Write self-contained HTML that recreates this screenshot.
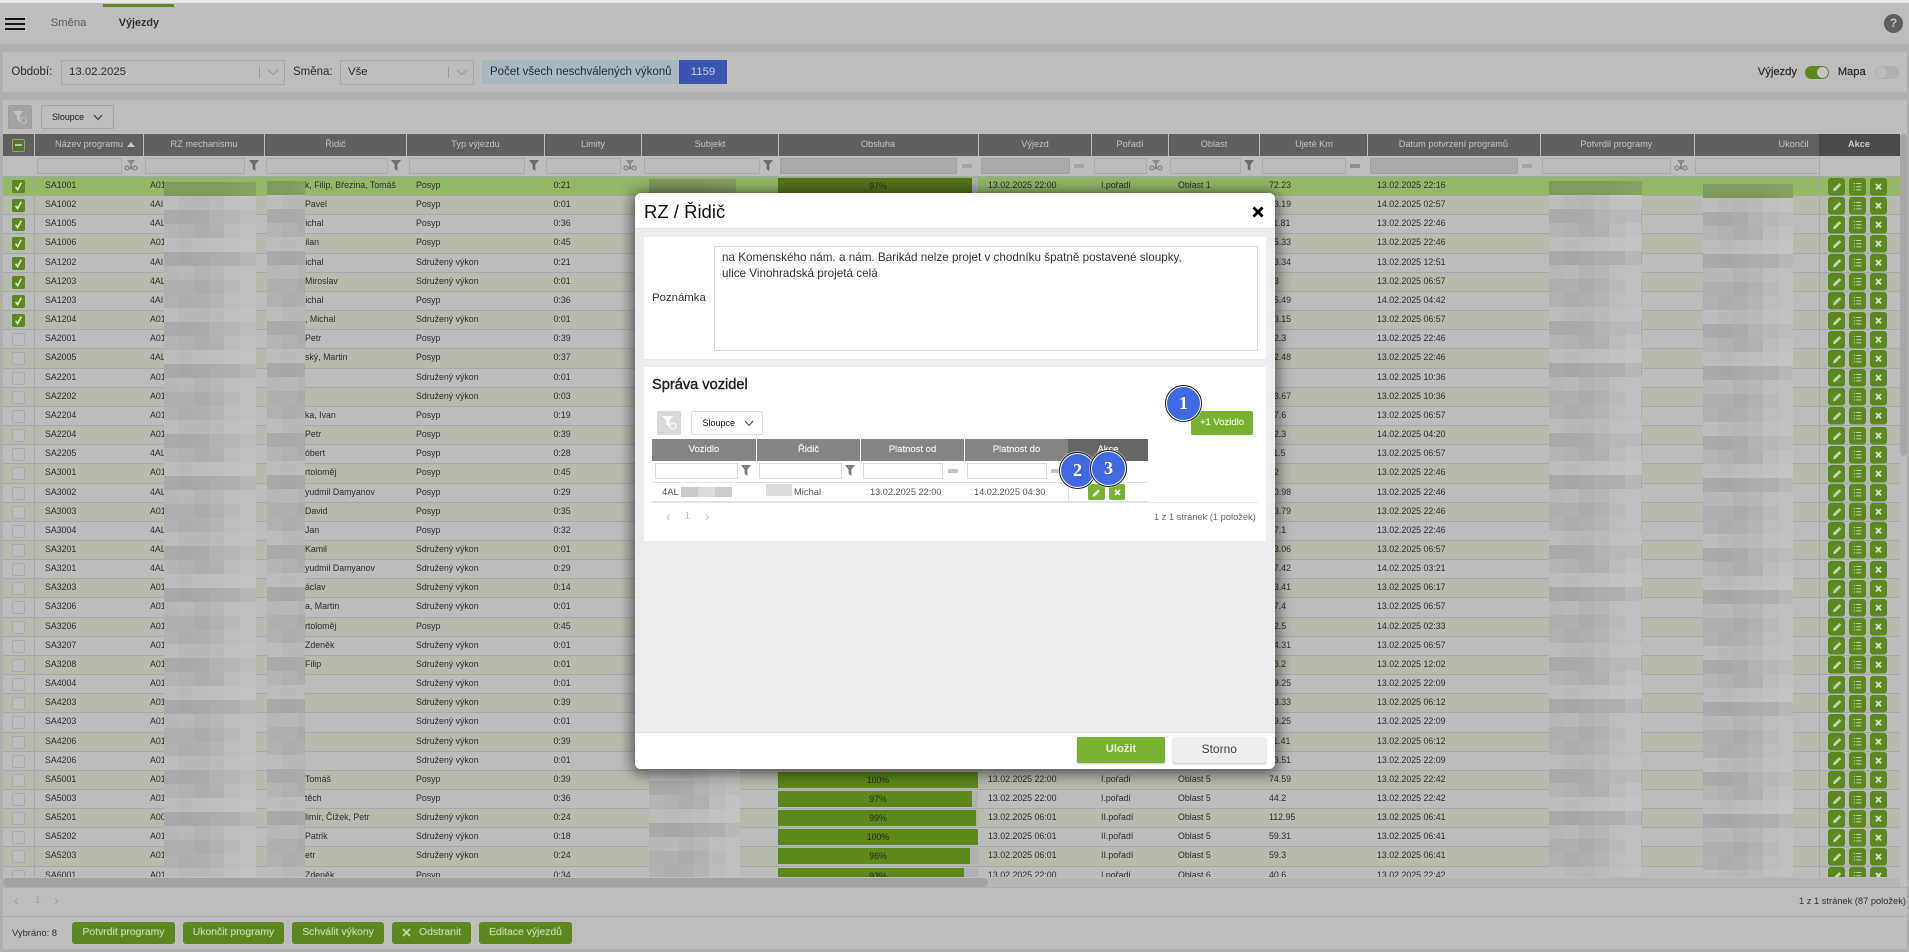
<!DOCTYPE html>
<html lang="cs">
<head>
<meta charset="utf-8">
<title>Výjezdy</title>
<style>
html,body{margin:0;padding:0;width:1909px;height:952px;overflow:hidden;background:#afafaf}
body{font-family:"Liberation Sans",sans-serif;color:#2e2e2e;position:relative}
.a{position:absolute;white-space:nowrap}
.h{position:absolute;top:134px;height:22px;line-height:20px;font-size:9.2px;color:#bcc5ca;transform:translateX(-50%);white-space:nowrap}
.sep{position:absolute;top:134px;height:22px;width:1px;background:#b9b9b9}
.in{position:absolute;top:158px;height:16px;box-sizing:border-box;border:1px solid #a8aaac;background:#bcbcbc}
.in.f{background:#a9a9a9;border-color:#9d9fa1}
.fn{position:absolute;width:10px;height:11px}
.ab{position:absolute;top:160px;width:14px;height:12px}
.ds{position:absolute;width:10px;height:4px;background:#a3a3a3}
#rows{position:absolute;left:3px;top:177px;width:1897px;height:700px;overflow:hidden}
.r{position:relative;height:19.17px;box-sizing:border-box;border-bottom:1px solid #a4a7ab;background:#bcbcbd;font-size:8.8px;line-height:17.4px}
.r:nth-child(even){background:#b7bbae}
.r.s{background:#94b866!important}
.r::before{content:"";position:absolute;left:31px;top:0;bottom:-1px;width:1px;background:#a4a7ab}
.r::after{content:"";position:absolute;left:1816px;top:0;bottom:-1px;width:1px;background:#a4a7ab}
.r span{position:absolute;top:0;white-space:nowrap}
.r span:nth-of-type(1){left:42px}
.r span:nth-of-type(2){left:147px}
.r span:nth-of-type(3){left:302px}
.r span:nth-of-type(4){left:413px}
.r span:nth-of-type(5){left:550.5px}
.r span:nth-of-type(6){left:1266px}
.r span:nth-of-type(7){left:1374px}
.r span:nth-of-type(9){left:985px}
.r span:nth-of-type(10){left:1098px}
.r span:nth-of-type(11){left:1175px}
.r span.m{margin-left:-7px}
.r span.o{left:775px;top:1px;width:200px;height:16px;line-height:16px;background:#aeb0b3;text-align:center;color:#262a14}
.r span.o u{position:absolute;left:0;top:0;height:16px;background:#5c871b;z-index:0}
.r span.o em{position:relative;font-style:normal;z-index:1}
.r svg.k,.r i.u{position:absolute;left:9px;top:3px;width:13px;height:13px}
.r i.u{box-sizing:border-box;border:1px solid #a8a9aa;border-radius:2px;background:#bdbdbd}
.r svg.z{position:absolute;left:1825px;top:.5px;width:59px;height:18px}
.mz{position:absolute}
.top{position:absolute;height:14px;background:linear-gradient(90deg,#7f9a5d 0 60%,#88a264)}
.gb{position:absolute;top:922px;height:22px;line-height:21px;border-radius:3px;background:#5c881f;color:#c8d4b4;font-size:10.4px;text-align:center;-webkit-text-stroke:.15px #c8d4b4}
.sel{position:absolute;top:60px;height:25px;box-sizing:border-box;border:1px solid #a4a6a8;line-height:23px;font-size:11.4px;background:#bdbdbd}
.sel i{position:absolute;top:6px;width:1px;height:11px;background:#9a9a9a}
#modal{position:absolute;left:635px;top:193px;width:640px;height:576px;background:#ecedef;border-radius:6px;box-shadow:0 2px 14px 3px rgba(0,0,0,.55);overflow:hidden}
#modal .w{position:absolute;background:#fff}
.mi{position:absolute;top:270px;height:16px;box-sizing:border-box;border:1px solid #d6d8da;background:#fff}
.mh{position:absolute;top:246px;height:22px;line-height:21px;background:#848484;color:#f2f2f2;font-size:9.5px;text-align:center;-webkit-text-stroke:.15px #f2f2f2}
.bd{position:absolute;width:33px;height:33px;border-radius:50%;background:#4169e1;border:1px solid #fff;outline:1px solid #1c1c1c;color:#fff;font:bold 18px/33px "Liberation Serif",serif;text-align:center;box-shadow:0 0 0 2px rgba(255,255,255,.45)}
</style>
</head>
<body>
<svg width="0" height="0" style="position:absolute">
<defs>
<pattern id="mp" patternUnits="userSpaceOnUse" width="92" height="112">
<rect width="92" height="112" fill="#bcbcbc"/>
<g shape-rendering="crispEdges">
<rect x="0" y="0" width="16" height="15" fill="#b0b0b0"/><rect x="15" y="0" width="16" height="15" fill="#acacac"/><rect x="30" y="0" width="16" height="15" fill="#aeaeae"/><rect x="45" y="0" width="16" height="15" fill="#b4b4b4"/><rect x="60" y="0" width="16" height="15" fill="#bcbdbc"/><rect x="76" y="0" width="16" height="15" fill="#c0c0c0"/>
<rect x="0" y="14" width="16" height="15" fill="#bcbcbc"/><rect x="15" y="14" width="16" height="15" fill="#b8b8b8"/><rect x="30" y="14" width="16" height="15" fill="#b6b6b6"/><rect x="45" y="14" width="16" height="15" fill="#bababa"/><rect x="60" y="14" width="16" height="15" fill="#c0c0c0"/><rect x="76" y="14" width="16" height="15" fill="#c2c2c2"/>
<rect x="0" y="28" width="16" height="15" fill="#a9a9a9"/><rect x="15" y="28" width="16" height="15" fill="#a8a8a8"/><rect x="30" y="28" width="16" height="15" fill="#aaaaaa"/><rect x="45" y="28" width="16" height="15" fill="#b2b2b2"/><rect x="60" y="28" width="16" height="15" fill="#b8b8b8"/><rect x="76" y="28" width="16" height="15" fill="#bcbcbc"/>
<rect x="0" y="42" width="16" height="15" fill="#b4b4b4"/><rect x="15" y="42" width="16" height="15" fill="#b0b0b0"/><rect x="30" y="42" width="16" height="15" fill="#acacac"/><rect x="45" y="42" width="16" height="15" fill="#b0b0b0"/><rect x="60" y="42" width="16" height="15" fill="#bcbcbc"/><rect x="76" y="42" width="16" height="15" fill="#c2c2c2"/>
<rect x="0" y="56" width="16" height="15" fill="#bcbcbc"/><rect x="15" y="56" width="16" height="15" fill="#bababa"/><rect x="30" y="56" width="16" height="15" fill="#bcbcbc"/><rect x="45" y="56" width="16" height="15" fill="#bebebe"/><rect x="60" y="56" width="16" height="15" fill="#c2c2c2"/><rect x="76" y="56" width="16" height="15" fill="#c4c4c4"/>
<rect x="0" y="70" width="16" height="15" fill="#a8a8a8"/><rect x="15" y="70" width="16" height="15" fill="#a6a6a6"/><rect x="30" y="70" width="16" height="15" fill="#a8a8a8"/><rect x="45" y="70" width="16" height="15" fill="#acacac"/><rect x="60" y="70" width="16" height="15" fill="#aeaeae"/><rect x="76" y="70" width="16" height="15" fill="#b8b8b8"/>
<rect x="0" y="84" width="16" height="15" fill="#b6b6b6"/><rect x="15" y="84" width="16" height="15" fill="#b8b8b8"/><rect x="30" y="84" width="16" height="15" fill="#b2b2b2"/><rect x="45" y="84" width="16" height="15" fill="#b6b6b6"/><rect x="60" y="84" width="16" height="15" fill="#bebebe"/><rect x="76" y="84" width="16" height="15" fill="#c0c0c0"/>
<rect x="0" y="98" width="16" height="14" fill="#aeaeae"/><rect x="15" y="98" width="16" height="14" fill="#aeaeae"/><rect x="30" y="98" width="16" height="14" fill="#aaaaaa"/><rect x="45" y="98" width="16" height="14" fill="#b0b0b0"/><rect x="60" y="98" width="16" height="14" fill="#bababa"/><rect x="76" y="98" width="16" height="14" fill="#c0c0c0"/>
</g>
</pattern>
</defs>
<symbol id="a" viewBox="0 0 59 18">
<rect width="17" height="17.5" rx="3" fill="#5c881f"/>
<rect x="21" width="17" height="17.5" rx="3" fill="#5c881f"/>
<rect x="42" width="17" height="17.5" rx="3" fill="#5c881f"/>
<path d="M5 13.2l.6-2.6 5.6-5.6 2 2-5.6 5.6z" fill="#c7d4b4"/>
<path d="M25.8 5.5h1.3M28.3 5.5h5M25.8 8.7h1.3M28.3 8.7h5M25.8 11.9h1.3M28.3 11.9h5" stroke="#c7d4b4" stroke-width="1" fill="none"/>
<path d="M48 6l5 5.4M53 6l-5 5.4" stroke="#d6dfc9" stroke-width="1.9" fill="none"/>
</symbol>
<symbol id="c" viewBox="0 0 13 13">
<rect width="13" height="13" rx="2" fill="#5c881f"/>
<path d="M3.6 6.8l2 2.8L9.2 2.8" stroke="#dfe8d2" stroke-width="1.6" fill="none"/>
</symbol>
<symbol id="f" viewBox="0 0 10 11"><path d="M0 0h10L6.4 4.6V11L3.6 9V4.6z"/></symbol>
<symbol id="b" viewBox="0 0 14 12"><path d="M3 0h8L8 4v6L6 8.5V4z" fill="#8a8a8a"/><circle cx="3" cy="8" r="2" fill="none" stroke="#777" stroke-width="1"/><circle cx="11" cy="8" r="2" fill="none" stroke="#777" stroke-width="1"/><path d="M5 8h4" stroke="#777"/></symbol>
</svg>

<!-- top strip and header -->
<div class="a" style="left:0;top:0;width:1909px;height:3px;background:#e8e8e8"></div>
<div class="a" style="left:0;top:3px;width:1909px;height:41px;background:#bdbdbd"></div>
<div class="a" style="left:103px;top:4px;width:71px;height:3px;background:#5c881f"></div>
<div class="a" style="left:5px;top:18px;width:20px;height:2px;background:#161616"></div>
<div class="a" style="left:5px;top:23px;width:20px;height:2px;background:#161616"></div>
<div class="a" style="left:5px;top:28px;width:20px;height:2px;background:#161616"></div>
<div class="a" style="left:50.6px;top:15px;line-height:16px;font-size:11.3px;color:#5b5b5b">Směna</div>
<div class="a" style="left:118.8px;top:15px;line-height:16px;font-size:10.8px;font-weight:bold;color:#333">Výjezdy</div>
<div class="a" style="left:1884px;top:14px;width:19px;height:19px;border-radius:50%;background:#5f5f5f;color:#c4c4c4;font-size:12px;font-weight:bold;line-height:19px;text-align:center">?</div>

<!-- filter bar -->
<div class="a" style="left:3px;top:52px;width:1904px;height:40px;background:#bdbdbd"></div>
<div class="a" style="left:11.4px;top:64px;line-height:16px;font-size:11.5px">Období:</div>
<div class="sel" style="left:61px;width:224px;padding-left:7px">13.02.2025<i style="left:197px"></i><svg class="a" style="left:206px;top:8px" width="10" height="7"><path d="M0 1l5 4.5L10 1" fill="none" stroke="#9a9a9a" stroke-width="1.2"/></svg></div>
<div class="a" style="left:293px;top:64px;line-height:16px;font-size:11.5px">Směna:</div>
<div class="sel" style="left:340px;width:134px;padding-left:7px">Vše<i style="left:107px"></i><svg class="a" style="left:116px;top:8px" width="10" height="7"><path d="M0 1l5 4.5L10 1" fill="none" stroke="#9a9a9a" stroke-width="1.2"/></svg></div>
<div class="a" style="left:482px;top:60px;width:197px;height:24px;background:#a8b8c1;line-height:24px;font-size:11.5px;padding-left:8px;box-sizing:border-box;color:#2b3034">Počet všech neschválených výkonů</div>
<div class="a" style="left:679px;top:60px;width:48px;height:24px;background:#3a55b0;line-height:24px;font-size:11.4px;text-align:center;color:#c8cfe0">1159</div>
<div class="a" style="left:1757.8px;top:64px;line-height:16px;font-size:11.2px;-webkit-text-stroke:.2px #222">Výjezdy</div>
<div class="a" style="left:1805px;top:66px;width:24px;height:13px;border-radius:7px;background:#5c881f"></div>
<div class="a" style="left:1817px;top:67px;width:11px;height:11px;border-radius:50%;background:#c4c4c4"></div>
<div class="a" style="left:1837.7px;top:64px;line-height:16px;font-size:11.2px;-webkit-text-stroke:.2px #222">Mapa</div>
<div class="a" style="left:1875px;top:66px;width:24px;height:13px;border-radius:7px;background:#afafaf"></div>
<div class="a" style="left:1876px;top:67px;width:11px;height:11px;border-radius:50%;background:#bcbcbc"></div>

<!-- grid panel -->
<div class="a" style="left:3px;top:100px;width:1904px;height:849px;background:#bdbdbd"></div>
<div class="a" style="left:8px;top:105px;width:24px;height:24px;box-sizing:border-box;background:#a3a3a3;border:1px solid #9c9c9c;border-radius:2px"><svg class="a" style="left:3px;top:4px" width="16" height="15"><path d="M1 1h10L8 6v6L5 9.5V6z" fill="#c2c2c2"/><circle cx="11.5" cy="10.5" r="3" fill="#a3a3a3" stroke="#c2c2c2"/></svg></div>
<div class="a" style="left:41px;top:105px;width:73px;height:24px;box-sizing:border-box;border:1px solid #a3a3a3;border-radius:2px"></div>
<div class="a" style="left:52px;top:109px;line-height:16px;font-size:8.9px;color:#1e1e1e">Sloupce</div>
<svg class="a" style="left:93px;top:114px" width="10" height="7"><path d="M1 1l4 4.5L9 1" fill="none" stroke="#333" stroke-width="1"/></svg>

<!-- header row -->
<div class="a" style="left:3px;top:134px;width:1816px;height:22px;background:#605e5f"></div>
<div class="a" style="left:1819px;top:134px;width:81px;height:22px;background:#4b4b4b"></div>
<div class="sep" style="left:34px"></div><div class="sep" style="left:143px"></div><div class="sep" style="left:264px"></div><div class="sep" style="left:406px"></div><div class="sep" style="left:544px"></div><div class="sep" style="left:641px"></div><div class="sep" style="left:778px"></div><div class="sep" style="left:978px"></div><div class="sep" style="left:1091px"></div><div class="sep" style="left:1168px"></div><div class="sep" style="left:1259px"></div><div class="sep" style="left:1367px"></div><div class="sep" style="left:1540px"></div><div class="sep" style="left:1694px"></div>
<div class="a" style="left:12px;top:138.5px;width:13px;height:13px;box-sizing:border-box;border:1px solid #86ad56;border-radius:2px;background:#57703a"></div>
<div class="a" style="left:15px;top:144px;width:7px;height:2px;background:#b6c6a0"></div>
<div class="h" style="left:89px">Název programu</div>
<svg class="a" style="left:127px;top:142px" width="8" height="5"><path d="M0 5L4 0l4 5z" fill="#c4c8cc"/></svg>
<div class="h" style="left:204px">RZ mechanismu</div>
<div class="h" style="left:335.5px">Řidič</div>
<div class="h" style="left:475.5px">Typ výjezdu</div>
<div class="h" style="left:593px">Limity</div>
<div class="h" style="left:710px">Subjekt</div>
<div class="h" style="left:878px">Obsluha</div>
<div class="h" style="left:1035px">Výjezd</div>
<div class="h" style="left:1130px">Pořadí</div>
<div class="h" style="left:1214px">Oblast</div>
<div class="h" style="left:1314px">Ujeté Km</div>
<div class="h" style="left:1453.4px">Datum potvrzení programů</div>
<div class="h" style="left:1616.4px">Potvrdil programy</div>
<div class="h" style="left:1793.6px">Ukončil</div>
<div class="h" style="left:1859px;font-weight:bold;color:#c3c8cc">Akce</div>

<!-- filter row -->
<div class="in" style="left:37px;width:85px"></div><svg class="ab" style="left:124px"><use href="#b"/></svg>
<div class="in" style="left:145px;width:100px"></div><svg class="fn" style="left:249px;top:160px;fill:#6c6c6c"><use href="#f"/></svg>
<div class="in" style="left:266px;width:122px"></div><svg class="fn" style="left:391px;top:160px;fill:#6c6c6c"><use href="#f"/></svg>
<div class="in" style="left:409px;width:116px"></div><svg class="fn" style="left:529px;top:160px;fill:#6c6c6c"><use href="#f"/></svg>
<div class="in" style="left:546px;width:75px"></div><svg class="ab" style="left:623px"><use href="#b"/></svg>
<div class="in" style="left:644px;width:116px"></div><svg class="fn" style="left:763px;top:160px;fill:#6c6c6c"><use href="#f"/></svg>
<div class="in f" style="left:780px;width:177px"></div><div class="ds" style="left:962px;top:164px"></div>
<div class="in f" style="left:981px;width:89px"></div><div class="ds" style="left:1074px;top:164px"></div>
<div class="in" style="left:1094px;width:53px"></div><svg class="ab" style="left:1149px"><use href="#b"/></svg>
<div class="in" style="left:1170px;width:71px"></div><svg class="fn" style="left:1244px;top:160px;fill:#6c6c6c"><use href="#f"/></svg>
<div class="in" style="left:1262px;width:84px"></div><div class="ds" style="left:1350px;top:164px;background:#8e8e8e"></div>
<div class="in f" style="left:1370px;width:148px"></div><div class="ds" style="left:1522px;top:164px"></div>
<div class="in" style="left:1542px;width:129px"></div><svg class="ab" style="left:1674px"><use href="#b"/></svg>
<div class="in" style="left:1695px;width:125px"></div>
<div class="a" style="left:1819px;top:156px;width:1px;height:21px;background:#a4a7ab"></div>
<div class="a" style="left:3px;top:176px;width:1897px;height:1px;background:#a4a7ab"></div>

<!-- rows -->
<div id="rows">
<div class="r s"><svg class="k"><use href="#c"/></svg><span>SA1001</span><span>A01</span><span>k, Filip, Březina, Tomáš</span><span>Posyp</span><span>0:21</span><span>72.23</span><span>13.02.2025 22:16</span><span class="o"><u style="width:97%;background:#55751c"></u><em>97%</em></span><span>13.02.2025 22:00</span><span>I.pořadí</span><span>Oblast 1</span><svg class="z"><use href="#a"/></svg></div>
<div class="r"><svg class="k"><use href="#c"/></svg><span>SA1002</span><span>4AI</span><span>Pavel</span><span>Posyp</span><span>0:01</span><span>13.19</span><span>14.02.2025 02:57</span><svg class="z"><use href="#a"/></svg></div>
<div class="r"><svg class="k"><use href="#c"/></svg><span>SA1005</span><span>4AL</span><span class="m">Michal</span><span>Posyp</span><span>0:36</span><span>11.81</span><span>13.02.2025 22:46</span><svg class="z"><use href="#a"/></svg></div>
<div class="r"><svg class="k"><use href="#c"/></svg><span>SA1006</span><span>A01</span><span class="m">Milan</span><span>Posyp</span><span>0:45</span><span>15.33</span><span>13.02.2025 22:46</span><svg class="z"><use href="#a"/></svg></div>
<div class="r"><svg class="k"><use href="#c"/></svg><span>SA1202</span><span>4AI</span><span class="m">Michal</span><span>Sdružený výkon</span><span>0:21</span><span>13.34</span><span>13.02.2025 12:51</span><svg class="z"><use href="#a"/></svg></div>
<div class="r"><svg class="k"><use href="#c"/></svg><span>SA1203</span><span>4AL</span><span>Miroslav</span><span>Sdružený výkon</span><span>0:01</span><span>13</span><span>13.02.2025 06:57</span><svg class="z"><use href="#a"/></svg></div>
<div class="r"><svg class="k"><use href="#c"/></svg><span>SA1203</span><span>4AI</span><span class="m">Michal</span><span>Posyp</span><span>0:36</span><span>15.49</span><span>14.02.2025 04:42</span><svg class="z"><use href="#a"/></svg></div>
<div class="r"><svg class="k"><use href="#c"/></svg><span>SA1204</span><span>A01</span><span>, Michal</span><span>Sdružený výkon</span><span>0:01</span><span>13.15</span><span>13.02.2025 06:57</span><svg class="z"><use href="#a"/></svg></div>
<div class="r"><i class="u"></i><span>SA2001</span><span>A01</span><span>Petr</span><span>Posyp</span><span>0:39</span><span>12.3</span><span>13.02.2025 22:46</span><svg class="z"><use href="#a"/></svg></div>
<div class="r"><i class="u"></i><span>SA2005</span><span>4AL</span><span>ský, Martin</span><span>Posyp</span><span>0:37</span><span>12.48</span><span>13.02.2025 22:46</span><svg class="z"><use href="#a"/></svg></div>
<div class="r"><i class="u"></i><span>SA2201</span><span>A01</span><span></span><span>Sdružený výkon</span><span>0:01</span><span></span><span>13.02.2025 10:36</span><svg class="z"><use href="#a"/></svg></div>
<div class="r"><i class="u"></i><span>SA2202</span><span>A01</span><span></span><span>Sdružený výkon</span><span>0:03</span><span>33.67</span><span>13.02.2025 10:36</span><svg class="z"><use href="#a"/></svg></div>
<div class="r"><i class="u"></i><span>SA2204</span><span>A01</span><span>ka, Ivan</span><span>Posyp</span><span>0:19</span><span>17.6</span><span>13.02.2025 06:57</span><svg class="z"><use href="#a"/></svg></div>
<div class="r"><i class="u"></i><span>SA2204</span><span>A01</span><span>Petr</span><span>Posyp</span><span>0:39</span><span>12.3</span><span>14.02.2025 04:20</span><svg class="z"><use href="#a"/></svg></div>
<div class="r"><i class="u"></i><span>SA2205</span><span>4AL</span><span>óbert</span><span>Posyp</span><span>0:28</span><span>11.5</span><span>13.02.2025 06:57</span><svg class="z"><use href="#a"/></svg></div>
<div class="r"><i class="u"></i><span>SA3001</span><span>A01</span><span>rtoloměj</span><span>Posyp</span><span>0:45</span><span>12</span><span>13.02.2025 22:46</span><svg class="z"><use href="#a"/></svg></div>
<div class="r"><i class="u"></i><span>SA3002</span><span>4AL</span><span>yudmil Damyanov</span><span>Posyp</span><span>0:29</span><span>10.98</span><span>13.02.2025 22:46</span><svg class="z"><use href="#a"/></svg></div>
<div class="r"><i class="u"></i><span>SA3003</span><span>A01</span><span>David</span><span>Posyp</span><span>0:35</span><span>13.79</span><span>13.02.2025 22:46</span><svg class="z"><use href="#a"/></svg></div>
<div class="r"><i class="u"></i><span>SA3004</span><span>4AL</span><span>Jan</span><span>Posyp</span><span>0:32</span><span>17.1</span><span>13.02.2025 22:46</span><svg class="z"><use href="#a"/></svg></div>
<div class="r"><i class="u"></i><span>SA3201</span><span>4AL</span><span>Kamil</span><span>Sdružený výkon</span><span>0:01</span><span>13.06</span><span>13.02.2025 06:57</span><svg class="z"><use href="#a"/></svg></div>
<div class="r"><i class="u"></i><span>SA3201</span><span>4AL</span><span>yudmil Damyanov</span><span>Sdružený výkon</span><span>0:29</span><span>17.42</span><span>14.02.2025 03:21</span><svg class="z"><use href="#a"/></svg></div>
<div class="r"><i class="u"></i><span>SA3203</span><span>A01</span><span>áclav</span><span>Sdružený výkon</span><span>0:14</span><span>13.41</span><span>13.02.2025 06:17</span><svg class="z"><use href="#a"/></svg></div>
<div class="r"><i class="u"></i><span>SA3206</span><span>A01</span><span>a, Martin</span><span>Sdružený výkon</span><span>0:01</span><span>17.4</span><span>13.02.2025 06:57</span><svg class="z"><use href="#a"/></svg></div>
<div class="r"><i class="u"></i><span>SA3206</span><span>A01</span><span>rtoloměj</span><span>Posyp</span><span>0:45</span><span>12.5</span><span>14.02.2025 02:33</span><svg class="z"><use href="#a"/></svg></div>
<div class="r"><i class="u"></i><span>SA3207</span><span>A01</span><span>Zdeněk</span><span>Sdružený výkon</span><span>0:01</span><span>14.31</span><span>13.02.2025 06:57</span><svg class="z"><use href="#a"/></svg></div>
<div class="r"><i class="u"></i><span>SA3208</span><span>A01</span><span>Filip</span><span>Sdružený výkon</span><span>0:01</span><span>13.2</span><span>13.02.2025 12:02</span><svg class="z"><use href="#a"/></svg></div>
<div class="r"><i class="u"></i><span>SA4004</span><span>A01</span><span></span><span>Sdružený výkon</span><span>0:01</span><span>19.25</span><span>13.02.2025 22:09</span><svg class="z"><use href="#a"/></svg></div>
<div class="r"><i class="u"></i><span>SA4203</span><span>A01</span><span></span><span>Sdružený výkon</span><span>0:39</span><span>13.33</span><span>13.02.2025 06:12</span><svg class="z"><use href="#a"/></svg></div>
<div class="r"><i class="u"></i><span>SA4203</span><span>A01</span><span></span><span>Sdružený výkon</span><span>0:01</span><span>19.25</span><span>13.02.2025 22:09</span><svg class="z"><use href="#a"/></svg></div>
<div class="r"><i class="u"></i><span>SA4206</span><span>A01</span><span></span><span>Sdružený výkon</span><span>0:39</span><span>11.41</span><span>13.02.2025 06:12</span><svg class="z"><use href="#a"/></svg></div>
<div class="r"><i class="u"></i><span>SA4206</span><span>A01</span><span></span><span>Sdružený výkon</span><span>0:01</span><span>13.51</span><span>13.02.2025 22:09</span><svg class="z"><use href="#a"/></svg></div>
<div class="r"><i class="u"></i><span>SA5001</span><span>A01</span><span>Tomáš</span><span>Posyp</span><span>0:39</span><span>74.59</span><span>13.02.2025 22:42</span><span class="o"><u style="width:100%"></u><em>100%</em></span><span>13.02.2025 22:00</span><span>I.pořadí</span><span>Oblast 5</span><svg class="z"><use href="#a"/></svg></div>
<div class="r"><i class="u"></i><span>SA5003</span><span>A01</span><span>těch</span><span>Posyp</span><span>0:36</span><span>44.2</span><span>13.02.2025 22:42</span><span class="o"><u style="width:97%"></u><em>97%</em></span><span>13.02.2025 22:00</span><span>I.pořadí</span><span>Oblast 5</span><svg class="z"><use href="#a"/></svg></div>
<div class="r"><i class="u"></i><span>SA5201</span><span>A00</span><span>limír, Čížek, Petr</span><span>Sdružený výkon</span><span>0:24</span><span>112.95</span><span>13.02.2025 06:41</span><span class="o"><u style="width:99%"></u><em>99%</em></span><span>13.02.2025 06:01</span><span>II.pořadí</span><span>Oblast 5</span><svg class="z"><use href="#a"/></svg></div>
<div class="r"><i class="u"></i><span>SA5202</span><span>A01</span><span>Patrik</span><span>Sdružený výkon</span><span>0:18</span><span>59.31</span><span>13.02.2025 06:41</span><span class="o"><u style="width:100%"></u><em>100%</em></span><span>13.02.2025 06:01</span><span>II.pořadí</span><span>Oblast 5</span><svg class="z"><use href="#a"/></svg></div>
<div class="r"><i class="u"></i><span>SA5203</span><span>A01</span><span>etr</span><span>Sdružený výkon</span><span>0:24</span><span>59.3</span><span>13.02.2025 06:41</span><span class="o"><u style="width:96%"></u><em>96%</em></span><span>13.02.2025 06:01</span><span>II.pořadí</span><span>Oblast 5</span><svg class="z"><use href="#a"/></svg></div>
<div class="r"><i class="u"></i><span>SA6001</span><span>A01</span><span>Zdeněk</span><span>Posyp</span><span>0:34</span><span>40.6</span><span>13.02.2025 22:42</span><span class="o"><u style="width:93%"></u><em>93%</em></span><span>13.02.2025 22:00</span><span>I.pořadí</span><span>Oblast 6</span><svg class="z"><use href="#a"/></svg></div>
<!-- pixelated privacy blocks -->
<svg class="mz" style="left:161px;top:5px;width:92px;height:695px"><rect width="92" height="695" fill="url(#mp)"/></svg>
<svg class="mz" style="left:264px;top:4px;width:38px;height:696px"><rect y="-42" width="38" height="760" fill="url(#mp)"/></svg>
<svg class="mz" style="left:646px;top:16px;width:91px;height:684px"><rect y="-70" width="91" height="760" fill="url(#mp)"/></svg>
<svg class="mz" style="left:1546px;top:4px;width:93px;height:696px"><rect y="-28" width="93" height="760" fill="url(#mp)"/></svg>
<svg class="mz" style="left:1700px;top:7px;width:90px;height:693px"><rect y="-98" width="90" height="800" fill="url(#mp)"/></svg>
<div class="top" style="left:161px;top:5px;width:92px"></div>
<div class="top" style="left:264px;top:4px;width:38px"></div>
<div class="top" style="left:646px;top:2px;width:87px;height:15px"></div>
<div class="top" style="left:1546px;top:4px;width:93px"></div>
<div class="top" style="left:1700px;top:7px;width:90px"></div>
</div>

<!-- scrollbars and pager -->
<div class="a" style="left:3px;top:878px;width:1897px;height:9px;background:#b5b5b5"></div>
<div class="a" style="left:3px;top:878px;width:985px;height:9px;border-radius:5px;background:#a2a2a2"></div>
<div class="a" style="left:3px;top:886.5px;width:1904px;height:1px;background:#a9abad"></div>
<div class="a" style="left:1900px;top:134px;width:7px;height:322px;border-radius:4px;background:#a6a6a6"></div>
<div class="a" style="left:14px;top:892px;line-height:16px;font-size:14px;color:#a0a0a0">‹</div>
<div class="a" style="left:35px;top:893px;line-height:16px;font-size:10px;color:#a0a0a0">1</div>
<div class="a" style="left:54px;top:892px;line-height:16px;font-size:14px;color:#a0a0a0">›</div>
<div class="a" style="left:1799px;top:893px;line-height:16px;font-size:9.3px;color:#333">1 z 1 stránek (87 položek)</div>
<div class="a" style="left:3px;top:916px;width:1904px;height:1px;background:#a9abad"></div>

<!-- footer -->
<div class="a" style="left:12px;top:925px;line-height:16px;font-size:9.4px;color:#333">Vybráno: 8</div>
<div class="gb" style="left:72px;width:103px">Potvrdit programy</div>
<div class="gb" style="left:183px;width:101px">Ukončit programy</div>
<div class="gb" style="left:292px;width:92px">Schválit výkony</div>
<div class="gb" style="left:392px;width:79px;box-sizing:border-box;text-align:left;padding-left:27px">Odstranit</div>
<svg class="a" style="left:402px;top:928px" width="9" height="9"><path d="M1 1l7 7M8 1l-7 7" stroke="#c8d4b4" stroke-width="1.8"/></svg>
<div class="gb" style="left:479px;width:93px">Editace výjezdů</div>

<!-- modal -->
<div id="modal">
<div class="w" style="left:0;top:0;width:640px;height:35px;border-bottom:1px solid #dfe1e4"></div>
<div class="a" style="left:9px;top:8px;line-height:22px;font-size:18.5px;color:#111">RZ / Řidič</div>
<svg class="a" style="left:617px;top:13px" width="12" height="12"><path d="M1.5 1.5l9 9M10.5 1.5l-9 9" stroke="#000" stroke-width="2.8"/></svg>

<div class="w" style="left:9px;top:44px;width:622px;height:122px"></div>
<div class="a" style="left:17px;top:97px;line-height:16px;font-size:11.4px;color:#333">Poznámka</div>
<div class="w" style="left:79px;top:53px;width:544px;height:105px;box-sizing:border-box;border:1px solid #d6d8da"></div>
<div class="a" style="left:87px;top:57px;line-height:16px;font-size:11.7px;color:#333">na Komenského nám. a nám. Barikád nelze projet v chodníku špatně postavené sloupky,<br>ulice Vinohradská projetá celá</div>

<div class="w" style="left:9px;top:174px;width:622px;height:174px"></div>
<div class="a" style="left:17px;top:183px;line-height:18px;font-size:14.6px;color:#222;-webkit-text-stroke:.4px #222">Správa vozidel</div>

<div class="a" style="left:22px;top:218px;width:24px;height:24px;background:#d9d9d9;border-radius:2px"><svg class="a" style="left:4px;top:4px" width="16" height="16"><path d="M1 1h11L8.5 6v6L5.5 9.5V6z" fill="#fff"/><circle cx="12" cy="11" r="3" fill="#d9d9d9" stroke="#fff"/></svg></div>
<div class="a" style="left:56px;top:218px;width:72px;height:24px;box-sizing:border-box;border:1px solid #dedede;border-radius:2px;background:#fff"></div>
<div class="a" style="left:67.5px;top:222px;line-height:16px;font-size:9px;color:#111">Sloupce</div>
<svg class="a" style="left:109px;top:227px" width="10" height="7"><path d="M1 1l4 4.5L9 1" fill="none" stroke="#444" stroke-width="1"/></svg>

<div class="mh" style="left:17px;width:104px">Vozidlo</div>
<div class="mh" style="left:122px;width:103px">Řidič</div>
<div class="mh" style="left:226px;width:103px">Platnost od</div>
<div class="mh" style="left:330px;width:103px">Platnost do</div>
<div class="mh" style="left:433px;width:80px;background:#676767">Akce</div>

<div class="mi" style="left:20px;width:83px"></div><svg class="fn" style="left:106px;top:272px;fill:#7d7d7d"><use href="#f"/></svg>
<div class="mi" style="left:124px;width:83px"></div><svg class="fn" style="left:210px;top:272px;fill:#7d7d7d"><use href="#f"/></svg>
<div class="mi" style="left:228px;width:80px"></div><div class="ds" style="left:313px;top:276px;background:#c4c4c4"></div>
<div class="mi" style="left:332px;width:80px"></div><div class="ds" style="left:416px;top:276px;background:#c4c4c4"></div>

<div class="a" style="left:17px;top:289px;width:496px;height:1px;background:#dfe1e4"></div>
<div class="a" style="left:433px;top:289px;width:1px;height:19px;background:#dfe1e4"></div>
<div class="a" style="left:27px;top:291px;line-height:16px;font-size:9.4px;color:#555">4AL</div>
<div class="a" style="left:46px;top:294px;width:17px;height:10px;background:#c9c9c9"></div>
<div class="a" style="left:63px;top:294px;width:17px;height:10px;background:#dbdbdb"></div>
<div class="a" style="left:80px;top:294px;width:17px;height:10px;background:#cbcbcb"></div>
<div class="a" style="left:131px;top:291px;width:26px;height:12px;background:#dcdcdc"></div>
<div class="a" style="left:159px;top:291px;line-height:16px;font-size:9.4px;color:#555">Michal</div>
<div class="a" style="left:235px;top:291px;line-height:16px;font-size:9.2px;color:#555">13.02.2025 22:00</div>
<div class="a" style="left:339px;top:291px;line-height:16px;font-size:9.2px;color:#555">14.02.2025 04:30</div>
<div class="a" style="left:453px;top:291px;width:17px;height:16px;border-radius:2px;background:#79b22f"></div>
<svg class="a" style="left:456px;top:294px" width="11" height="11"><path d="M1.5 9.8l.5-2.4 5-5 1.9 1.9-5 5z" fill="#eef5e2"/></svg>
<div class="a" style="left:474px;top:291px;width:16px;height:16px;border-radius:2px;background:#79b22f"></div>
<svg class="a" style="left:478.5px;top:295.5px" width="7" height="7"><path d="M1 1l5 5M6 1L1 6" stroke="#fff" stroke-width="1.7"/></svg>
<div class="a" style="left:17px;top:307.5px;width:496px;height:1.5px;background:#dfe1e4"></div>
<div class="a" style="left:17px;top:309px;width:606px;height:1px;background:#e4e6e8"></div>

<div class="a" style="left:31px;top:315px;line-height:16px;font-size:14px;color:#c2c2c2">‹</div>
<div class="a" style="left:49.5px;top:316px;line-height:16px;font-size:10px;color:#c2c2c2">1</div>
<div class="a" style="left:70px;top:315px;line-height:16px;font-size:14px;color:#c2c2c2">›</div>
<div class="a" style="left:519px;top:316px;line-height:16px;font-size:9.3px;color:#666">1 z 1 stránek (1 položek)</div>

<div class="a" style="left:556px;top:218px;width:62px;height:24px;border-radius:2px;background:#79b22f;color:#eff5e4;font-size:9.5px;line-height:23px;text-align:center;-webkit-text-stroke:.15px #eff5e4">+1 Vozidlo</div>

<div class="w" style="left:0;top:539px;width:640px;height:37px;border-top:1px solid #dfe1e4;box-sizing:border-box"></div>
<div class="a" style="left:442px;top:544px;width:88px;height:26px;border-radius:2px;background:#79b22f;color:#eef5e2;font-size:11.2px;font-weight:bold;line-height:25px;text-align:center;box-shadow:0 1px 2px rgba(0,0,0,.25)">Uložit</div>
<div class="a" style="left:537.5px;top:544px;width:93.5px;height:26px;border-radius:2px;background:#eeeeee;color:#444;font-size:12px;line-height:25px;text-align:center;box-shadow:0 1px 2px rgba(0,0,0,.25)">Storno</div>
</div>

<!-- number badges -->
<div class="bd" style="left:1166px;top:386px">1</div>
<div class="bd" style="left:1060px;top:453px">2</div>
<div class="bd" style="left:1091px;top:451px">3</div>
</body>
</html>
